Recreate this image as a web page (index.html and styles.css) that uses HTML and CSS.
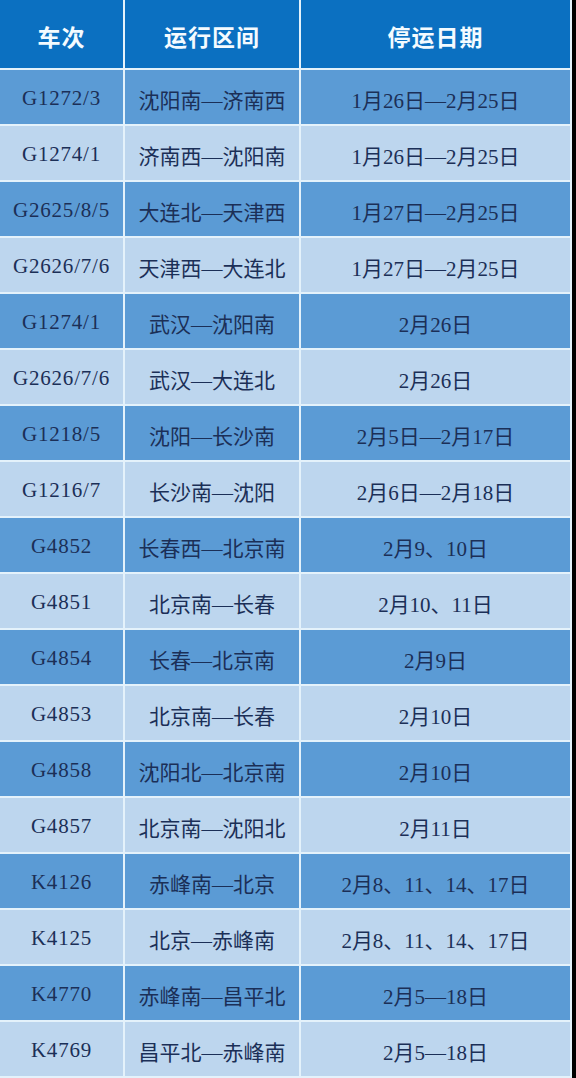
FILE: index.html
```html
<!DOCTYPE html>
<html lang="zh-CN">
<head>
<meta charset="utf-8">
<link rel="stylesheet" href="styles.css">
</head>
<body>
<div class="table">
  <div class="th">车次</div><div class="th">运行区间</div><div class="th">停运日期</div>

  <div class="td d no">G1272/3</div><div class="td d">沈阳南—济南西</div><div class="td d">1月26日—2月25日</div>
  <div class="td l no">G1274/1</div><div class="td l">济南西—沈阳南</div><div class="td l">1月26日—2月25日</div>
  <div class="td d no">G2625/8/5</div><div class="td d">大连北—天津西</div><div class="td d">1月27日—2月25日</div>
  <div class="td l no">G2626/7/6</div><div class="td l">天津西—大连北</div><div class="td l">1月27日—2月25日</div>
  <div class="td d no">G1274/1</div><div class="td d">武汉—沈阳南</div><div class="td d">2月26日</div>
  <div class="td l no">G2626/7/6</div><div class="td l">武汉—大连北</div><div class="td l">2月26日</div>
  <div class="td d no">G1218/5</div><div class="td d">沈阳—长沙南</div><div class="td d">2月5日—2月17日</div>
  <div class="td l no">G1216/7</div><div class="td l">长沙南—沈阳</div><div class="td l">2月6日—2月18日</div>
  <div class="td d no">G4852</div><div class="td d">长春西—北京南</div><div class="td d">2月9、10日</div>
  <div class="td l no">G4851</div><div class="td l">北京南—长春</div><div class="td l">2月10、11日</div>
  <div class="td d no">G4854</div><div class="td d">长春—北京南</div><div class="td d">2月9日</div>
  <div class="td l no">G4853</div><div class="td l">北京南—长春</div><div class="td l">2月10日</div>
  <div class="td d no">G4858</div><div class="td d">沈阳北—北京南</div><div class="td d">2月10日</div>
  <div class="td l no">G4857</div><div class="td l">北京南—沈阳北</div><div class="td l">2月11日</div>
  <div class="td d no">K4126</div><div class="td d">赤峰南—北京</div><div class="td d">2月8、11、14、17日</div>
  <div class="td l no">K4125</div><div class="td l">北京—赤峰南</div><div class="td l">2月8、11、14、17日</div>
  <div class="td d no">K4770</div><div class="td d">赤峰南—昌平北</div><div class="td d">2月5—18日</div>
  <div class="td l no">K4769</div><div class="td l">昌平北—赤峰南</div><div class="td l">2月5—18日</div>
</div>
</body>
</html>
```

FILE: styles.css
```css
html, body {
  margin: 0;
  padding: 0;
  background: #000;
}
.table {
  width: 572px;
  box-sizing: border-box;
  display: grid;
  grid-template-columns: 123px 174px 1fr;
  grid-template-rows: 68px;
  grid-auto-rows: 54px;
  gap: 2px;
  padding: 0 2px 2px 0;
  background: #e4f2fb;
}
.th, .td {
  display: flex;
  align-items: center;
  justify-content: center;
  white-space: nowrap;
}
.th {
  background: #0b70c1;
  color: #f4fbff;
  font-family: "Noto Sans CJK SC", sans-serif;
  font-weight: 700;
  font-size: 23px;
  letter-spacing: 1px;
  padding-top: 4px;
  box-sizing: border-box;
}
.td {
  font-family: "Liberation Serif", "Noto Sans CJK SC", serif;
  font-size: 21px;
  color: #1b2f57;
  padding-top: 3px;
  box-sizing: border-box;
}
.no {
  letter-spacing: 0.8px;
}
.d { background: #5b9bd5; }
.l { background: #bdd6ee; }
```
